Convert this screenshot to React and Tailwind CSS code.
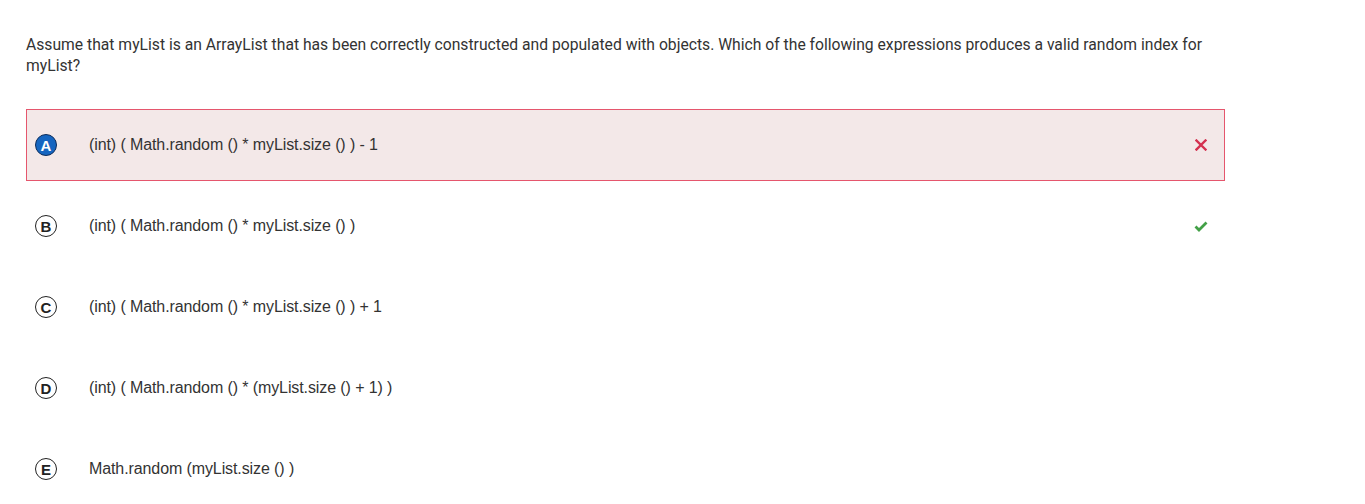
const options = [
  { letter: "A", text: "(int) ( Math.random () * myList.size () ) - 1", state: "wrong" },
  { letter: "B", text: "(int) ( Math.random () * myList.size () )", state: "correct" },
  { letter: "C", text: "(int) ( Math.random () * myList.size () ) + 1" },
  { letter: "D", text: "(int) ( Math.random () * (myList.size () + 1) )" },
  { letter: "E", text: "Math.random (myList.size () )" },
];

const Cross = () => (
  <svg width="12" height="12" viewBox="0 0 12 12">
    <path d="M1.5 1.5 L10.5 10.5 M10.5 1.5 L1.5 10.5" stroke="#d4304f" strokeWidth="2.4" strokeLinecap="square" />
  </svg>
);

const Check = () => (
  <svg width="14" height="11" viewBox="0 0 14 11">
    <path d="M1.5 5.5 L5 9 L12.5 1.5" fill="none" stroke="#43a047" strokeWidth="2.8" />
  </svg>
);

const Option = ({ letter, text, state }) => {
  const wrong = state === "wrong";
  return (
    <div
      className={
        wrong
          ? "flex h-[72px] items-center border border-[#e5566d] bg-[#f3e8e8] pl-[8px] pr-[16px]"
          : "flex h-[72px] items-center border border-transparent pl-[8px] pr-[16px]"
      }
    >
      <div
        className={
          wrong
            ? "flex h-[22px] w-[22px] items-center justify-center rounded-full border-[1.5px] border-[#0d2c5a] bg-[#1565c0] text-[15px] font-bold leading-none text-white"
            : "flex h-[22px] w-[22px] items-center justify-center rounded-full border-[1.5px] border-[#222] bg-white text-[15px] font-bold leading-none text-[#222]"
        }
      >
        {letter}
      </div>
      <div className="ml-[32px] flex-1 text-[16px] tracking-[-0.1px] text-[#333]">{text}</div>
      <div className="flex w-[14px] justify-center">
        {state === "wrong" ? <Cross /> : state === "correct" ? <Check /> : null}
      </div>
    </div>
  );
};

export default function App() {
  return (
    <div
      className="min-h-screen bg-white pl-[26px] pt-[34px]"
      style={{ fontFamily: "Roboto, 'Liberation Sans', Arial, sans-serif" }}
    >
      <p className="w-[1200px] text-[15.7px] leading-[21px] text-[#333]">
        Assume that myList is an ArrayList that has been correctly constructed and populated with objects. Which of the following expressions produces a valid random index for myList?
      </p>
      <div
        className="mt-[33px] flex w-[1199px] flex-col gap-[9px]"
        style={{ fontFamily: "'Liberation Sans', Arial, sans-serif" }}
      >
        {options.map((o) => (
          <Option key={o.letter} {...o} />
        ))}
      </div>
    </div>
  );
}
